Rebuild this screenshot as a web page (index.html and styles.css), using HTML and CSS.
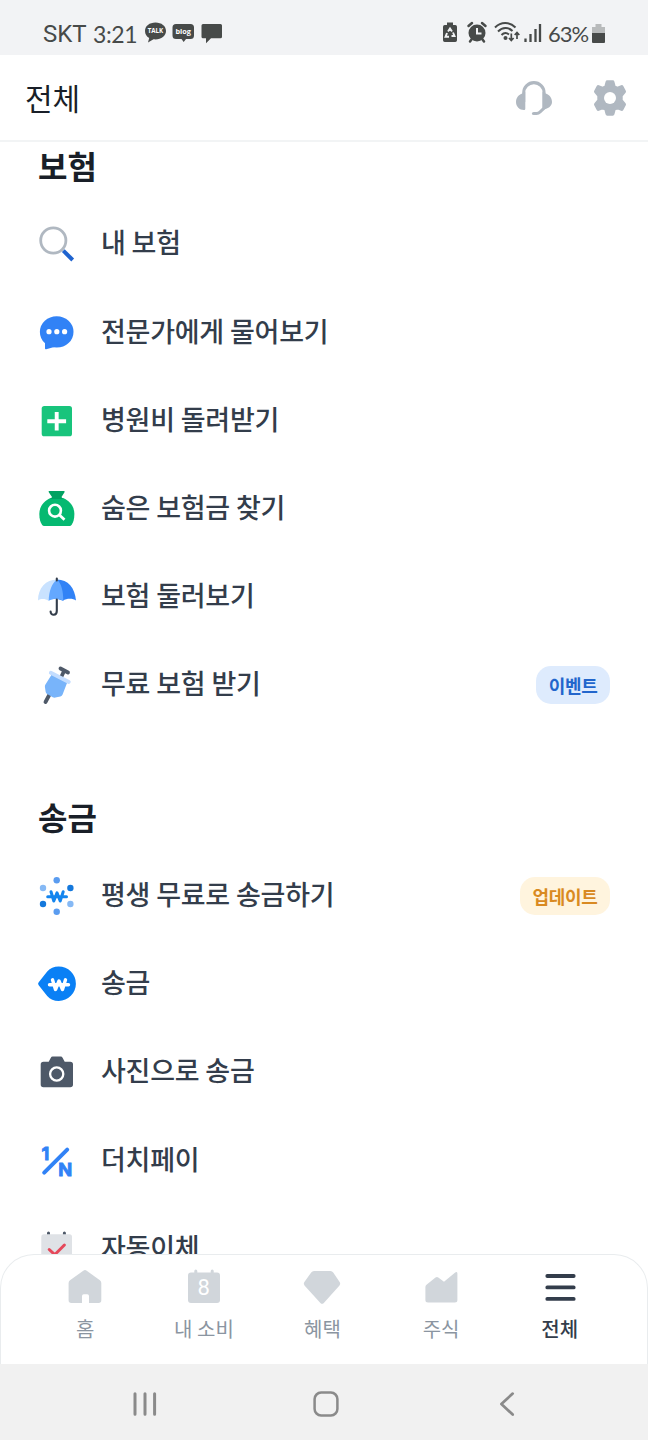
FILE: index.html
```html
<!DOCTYPE html>
<html lang="ko">
<head>
<meta charset="utf-8">
<meta name="viewport" content="width=device-width">
<title>전체</title>
<link rel="stylesheet" href="styles.css">
</head>
<body>
<div class="phone">
  <div class="status">
    <span class="carrier">SKT</span>
    <span class="clock">3:21</span>
    <svg class="notices" width="80" height="24" viewBox="0 0 80 24">
      <path fill="#474a49" d="M11.500 1.500C5.500 1.500 1 5 1 10c0 3 1.500 5.500 4.200 7L4 21.500l5.500-3.200c7 .8 12.500-3 12.500-8.300 0-5-4.500-8.500-10.500-8.500z"/>
      <text class="tiny" x="3.700" y="12" textLength="15.500" lengthAdjust="spacingAndGlyphs">TALK</text>
      <path fill="#474a49" d="M32 3h14.500a3.500 3.500 0 0 1 3.500 3.500v8a3.500 3.500 0 0 1-3.500 3.500H42l-2.300 3L37.500 18H32a3.500 3.500 0 0 1-3.500-3.500v-8A3.500 3.500 0 0 1 32 3z"/>
      <text class="tiny" x="31.500" y="12.500" textLength="15.500" lengthAdjust="spacingAndGlyphs">blog</text>
      <path fill="#474a49" d="M59 3h17.500a1.500 1.500 0 0 1 1.500 1.500v11.200a1.500 1.500 0 0 1-1.500 1.500H67l-5 5V17.200H59a1.500 1.500 0 0 1-1.500-1.500V4.500A1.500 1.500 0 0 1 59 3z"/>
    </svg>
    <svg class="signals" width="104" height="24" viewBox="0 0 104 24">
      <path fill="#474a49" d="M5 1.500h6V4h2.300A1.700 1.700 0 0 1 15 5.700v13.600a1.700 1.700 0 0 1-1.700 1.700H2.700A1.700 1.700 0 0 1 1 19.300V5.700A1.700 1.700 0 0 1 2.700 4H5z"/>
      <path fill="none" stroke="#f2f3f5" stroke-width="1.900" d="M6 10.500l2-3 2 3M11 11.500l1.500 3.500H9.500M7 15.800H3.500L5 12"/>
      <circle cx="35" cy="12" r="8.500" fill="#474a49"/>
      <path fill="none" stroke="#474a49" stroke-width="2.500" stroke-linecap="round" d="M26.500 5l3.500-3M43.500 5L40 2M29.500 18.500L28 20.500M40.500 18.500L42 20.500"/>
      <path fill="none" stroke="#f2f3f5" stroke-width="2" d="M35 7v5.500h4.500"/>
      <g fill="none" stroke="#474a49" stroke-width="2">
        <path d="M53 6.500c6-6 14.500-6 20.500 0M56 10.500c4.500-4.500 10.500-4.500 14.500-.5M59.500 14c2-2 5-2.500 7.500-.5"/>
        <path stroke-width="1.700" d="M69.300 12.500v7M67 17l2.300 2.500 2.300-2.500M75 18v-6.500M72.700 14l2.300-2.500 2.300 2.500"/>
        <path stroke-width="2.300" d="M83.500 17.500V21M88.500 13v8M93.500 8v13M98 3v18"/>
      </g>
      <circle cx="63.500" cy="17" r="2" fill="#474a49"/>
    </svg>
    <span class="percent">63%</span>
    <svg width="13" height="20" viewBox="0 0 13 20">
      <path fill="#b8babb" d="M3.500 0h6v3H13v7H0V3h3.500z"/>
      <path fill="#474a49" d="M0 9h13v9a1 1 0 0 1-1 1H1a1 1 0 0 1-1-1z"/>
    </svg>
  </div>

  <header class="header">
    <h1 class="page-title">전체</h1>
    <svg width="40" height="40" viewBox="0 0 40 40">
      <g fill="#b0b8c1">
        <path d="M11.300 14v16.700c0 .8-.6 1.300-1.400 1.300C5.500 32 2 28.500 2 24c0-4.200 2.800-7.300 6.300-8.500z"/>
        <path d="M28.500 14v17.500c5.500-.5 9.500-3.300 9.500-7.500 0-4.200-2.800-7.300-6.300-8.500z"/>
      </g>
      <path fill="none" stroke="#b0b8c1" stroke-width="3.100" d="M9.700 24V14.800a10.200 10.200 0 0 1 20.400 0V30L26 34q-1.500 1.500-3.500 1.500h-2.700"/>
      <circle cx="19.500" cy="35.500" r="1.550" fill="#b0b8c1"/>
    </svg>
    <svg class="gear" width="40" height="40" viewBox="0 0 40 40">
      <path fill="#b0b8c1" stroke="#b0b8c1" stroke-width="3.600" stroke-linejoin="round" d="M17.300 4.100h5.400l1.200 4.700 3.200 1.800 4.600-1.700 2.500 4.700-3.300 3.900v5l3.300 3.900-2.500 4.700-4.600-1.700-3.200 1.800-1.200 4.700h-5.400l-1.200-4.700-3.200-1.800-4.600 1.700-2.500-4.700 3.300-3.900v-5l-3.300-3.900 2.500-4.700 4.600 1.700 3.200-1.800z"/>
      <circle cx="20" cy="20" r="6" fill="#fff"/>
    </svg>
  </header>

  <main class="content">
    <section class="group">
      <h2 class="group-title">보험</h2>
      <ul class="list">
        <li class="row"><svg class="icon" viewBox="0 0 40 40"><circle cx="16.300" cy="16.500" r="12.600" fill="none" stroke="#b0b8c1" stroke-width="2.800"/><path d="M26.300 26.700l9.400 9.300" stroke="#1f63cf" stroke-width="4"/></svg><span class="label">내 보험</span></li>
        <li class="row"><svg class="icon" viewBox="0 0 40 40"><ellipse cx="19.700" cy="18.900" rx="16.800" ry="15.700" fill="#3182f6"/><path fill="#3182f6" d="M8 28v7.500q0 1 1.200.7l8-2.200z"/><g fill="#fff"><circle cx="12" cy="18.700" r="2.600"/><circle cx="19.800" cy="18.700" r="2.600"/><circle cx="27.600" cy="18.700" r="2.600"/></g></svg><span class="label">전문가에게 물어보기</span></li>
        <li class="row"><svg class="icon" viewBox="0 0 40 40"><rect x="4.700" y="5" width="30.300" height="30.300" rx="2.600" fill="#18c47c"/><path d="M10.300 20.200h18.800M19.700 10.900v18.600" stroke="#fff" stroke-width="3.900"/></svg><span class="label">병원비 돌려받기</span></li>
        <li class="row"><svg class="icon" viewBox="0 0 40 40"><path fill="#05b971" d="M13.500 9C6.500 12 2.300 18 2.300 25c0 5 1.200 8.500 2.700 10.800q.8 1.200 2.200 1.200h25.300q1.400 0 2.200-1.200c1.500-2.300 2.700-5.800 2.700-10.800 0-7-4.200-13-11.200-16z"/><path fill="#02a262" d="M12.300 2h14.600q1.200 0 .6 1.200L24.500 8l1.500 2H13.500L15 8l-3.200-4.800Q11.100 2 12.300 2z"/><circle cx="18" cy="21.700" r="5.900" fill="none" stroke="#fff" stroke-width="2.600"/><path d="M22.200 25.800l5.300 5" stroke="#fff" stroke-width="2.800"/></svg><span class="label">숨은 보험금 찾기</span></li>
        <li class="row"><svg class="icon" viewBox="0 0 40 40"><path fill="#c9e2ff" d="M20 2.500C9 2.500 1 11 1 23.500c2.500-2 7.500-2 10.500.2 2-1.800 4-2 8.500-2z"/><path fill="#3182f6" d="M20 2.500c11 0 18 8.500 19 21-3-2.200-9.500-2.200-13 .2l-6-2z"/><path fill="#64a8ff" d="M20 2.500c-5.500 4-8 12-8.300 21.200 4-2.200 10.500-2.200 14.600 0C26.300 14.500 24.500 6.500 20 2.500z"/><path d="M19.800 1.500v2M19.800 22.500V34c0 5-6.200 5-6.200.5" fill="none" stroke="#333d4b" stroke-width="2.100" stroke-linecap="round"/></svg><span class="label">보험 둘러보기</span></li>
        <li class="row"><svg class="icon" viewBox="0 0 40 40"><path d="M23.500 3.500l7.500 4M27.300 5.500L24 12.500M12.500 29.500l-4 7.500" stroke="#4e5968" stroke-width="3.800" stroke-linecap="round"/><path fill="#78b4fa" d="M14.700 9.500l15.500 8-4.600 12q-.6 1.600-2.200 2l-5 1.100q-1.500.3-2.700-.4l-5.500-3.200q-1.200-.7-1.500-2l-.8-5q-.1-1.200.4-2.200z"/><path d="M13.800 7.800l18 9.200" stroke="#c3ddff" stroke-width="3.800" stroke-linecap="round"/></svg><span class="label">무료 보험 받기</span><span class="badge badge-event">이벤트</span></li>
      </ul>
    </section>
    <section class="group group-send">
      <h2 class="group-title">송금</h2>
      <ul class="list">
        <li class="row"><svg class="icon" viewBox="0 0 40 40"><g fill="#5a9cf0"><circle cx="19.700" cy="4.300" r="3.200"/><circle cx="19.700" cy="35.700" r="3.200"/></g><g fill="#86b9f5"><circle cx="6" cy="12" r="3.200"/><circle cx="33.400" cy="28" r="3.200"/></g><g fill="#1478dc"><circle cx="33.400" cy="12" r="3.200"/><circle cx="6" cy="28" r="3.200"/></g><path d="M14 15.800l2.800 9.200 3.200-8.200 3.200 8.200 3-9.200M10.700 20.700h3.500M26 20.700h3.500M17 20.700h6" fill="none" stroke="#1485ee" stroke-width="3" stroke-linecap="round" stroke-linejoin="round"/></svg><span class="label">평생 무료로 송금하기</span><span class="badge badge-update">업데이트</span></li>
        <li class="row"><svg class="icon" viewBox="0 0 40 40"><path fill="#0a80f5" d="M1.700 18.200L10.200 7.500C13.200 4.300 17 2.500 21.700 2.500a17.200 17.200 0 0 1 0 34.400c-4.700 0-8.500-1.800-11.500-5L1.700 21.200q-1.300-1.500 0-3z"/><path d="M15.500 15.800l3 9.700 3.500-8.500 3.500 8.500 3-9.700M12.500 20.800h3.500M28 20.800h3.500M19 20.800h6" fill="none" stroke="#fff" stroke-width="3.400" stroke-linecap="round" stroke-linejoin="round"/></svg><span class="label">송금</span></li>
        <li class="row"><svg class="icon" viewBox="0 0 40 40"><path fill="#4e5968" d="M6.500 9.700h5.200l2-3.800q.7-1.300 2-1.300h8q1.300 0 2 1.300l2 3.800h5.600q2.700 0 2.700 2.700v20.200q0 2.700-2.700 2.700H6.400q-2.700 0-2.700-2.700V12.400q0-2.700 2.800-2.700z"/><circle cx="19.700" cy="22" r="6.600" fill="none" stroke="#fff" stroke-width="2.300"/></svg><span class="label">사진으로 송금</span></li>
        <li class="row"><svg class="icon" viewBox="0 0 40 40"><path d="M7.200 31.700L30.200 8.700" stroke="#3182f6" stroke-width="4" stroke-linecap="round"/><text class="ratio" x="4.500" y="18.700">1</text><text class="ratio" x="21.300" y="35" textLength="14" lengthAdjust="spacingAndGlyphs">N</text></svg><span class="label">더치페이</span></li>
        <li class="row"><svg class="icon" viewBox="0 0 40 40"><path d="M11.500 4v4M27.400 4v4" stroke="#4e5968" stroke-width="3" stroke-linecap="round"/><rect x="4.300" y="5.300" width="30.700" height="30.700" rx="2.600" fill="#dfe2e6"/><path d="M12.200 20.500l5.500 5.200 9.700-9.700" fill="none" stroke="#e5485a" stroke-width="3" stroke-linecap="round" stroke-linejoin="round"/></svg><span class="label">자동이체</span></li>
      </ul>
    </section>
  </main>

  <nav class="tabs">
    <a class="tab"><svg class="icon" viewBox="0 0 40 40"><path fill="#d1d6db" d="M18.300 3.700L5 13.300q-1.400 1-1.400 2.700v17.300Q3.600 36 6.300 36H17v-7q0-1.800 1.800-1.800h3.400Q24 27.200 24 29v7h9.600q2.700 0 2.700-2.700V16q0-1.700-1.400-2.700L21.700 3.700q-1.700-1.200-3.400 0z"/></svg><span>홈</span></a>
    <a class="tab"><svg class="icon" viewBox="0 0 40 40"><path d="M11.800 4v4M28.200 4v4" stroke="#d1d6db" stroke-width="3" stroke-linecap="round"/><rect x="4" y="5.500" width="32" height="30.500" rx="3" fill="#d1d6db"/><text class="day" x="19.700" y="28.300">8</text></svg><span>내 소비</span></a>
    <a class="tab"><svg class="icon" viewBox="0 0 40 40"><path fill="#d1d6db" d="M12 4h16.500q1.700 0 2.700 1.500l6.600 9.800q1 1.600-.3 3.200L21.800 36q-1.700 1.700-3.400 0L2.500 18.500q-1.300-1.600-.3-3.200l7-9.800Q10.300 4 12 4z"/></svg><span>혜택</span></a>
    <a class="tab"><svg class="icon" viewBox="0 0 40 40"><path fill="#d1d6db" d="M5.500 17.800l9-7.300q1.500-1 2.800 0l5.700 4.300 11.200-9.300q2-1.300 2.200 1V33q0 2.500-2.500 2.500H7q-2.600 0-2.600-2.500V20q0-1.300 1.100-2.200z"/></svg><span>주식</span></a>
    <a class="tab tab-active"><svg class="icon" viewBox="0 0 40 40"><path d="M7.300 9h26.400M7.300 20.400h26.400M7.300 31.900h26.400" stroke="#333d4b" stroke-width="3.800" stroke-linecap="round"/></svg><span>전체</span></a>
  </nav>

  <div class="system">
    <svg width="30" height="30" viewBox="0 0 30 30"><path d="M5 4.800v20.400M15 4.800v20.400M24.600 4.800v20.400" stroke="#8a8a8a" stroke-width="3" stroke-linecap="round"/></svg>
    <svg width="30" height="30" viewBox="0 0 30 30"><rect x="3.600" y="3.600" width="22.800" height="22.800" rx="6.500" fill="none" stroke="#8a8a8a" stroke-width="2.500"/></svg>
    <svg width="30" height="30" viewBox="0 0 30 30"><path d="M20.700 4.600L9.400 15l11.300 10.600" fill="none" stroke="#8a8a8a" stroke-width="2.700" stroke-linecap="round" stroke-linejoin="round"/></svg>
  </div>
</div>
</body>
</html>
```
FILE: styles.css
```css
* { box-sizing: border-box; }
body { margin: 0; background: #fff; font-family: "Noto Sans CJK KR", sans-serif; }
h1, h2, ul { margin: 0; padding: 0; font-weight: 400; }
ul { list-style: none; }
svg { display: block; flex: none; }

.phone {
  position: relative;
  display: flex;
  flex-direction: column;
  width: 648px;
  height: 1440px;
  overflow: hidden;
  background: #fff;
}

.status {
  flex: none;
  display: flex;
  align-items: center;
  height: 55px;
  padding: 12px 43px 0;
  background: #f2f3f5;
  color: #474a49;
  font: 24px/30px Roboto, sans-serif;
}
.carrier { width: 50px; }
.clock { width: 51px; font-family: Lato, sans-serif; font-size: 23px; letter-spacing: -0.4px; }
.notices { margin-top: -2px; }
.signals { margin: -2px 2px 0 auto; }
.percent { width: 44px; font-family: Lato, sans-serif; font-size: 22px; letter-spacing: -1px; }
.tiny { fill: #fff; font: 700 7.5px "Open Sans", sans-serif; }

.header {
  flex: none;
  display: flex;
  align-items: center;
  height: 87px;
  padding: 0 18px 0 25px;
  border-bottom: 2px solid #f2f4f5;
}
.page-title {
  margin: -1px auto 0 0;
  color: #191f28;
  font-size: 30px;
  line-height: 44px;
}
.gear { margin-left: 36px; }

.content { flex: 1; min-height: 0; overflow: hidden; padding: 0 38px; }
.group-title {
  height: 58.400px;
  color: #191f28;
  font-size: 32px;
  font-weight: 700;
  line-height: 46px;
}
.group-send { padding-top: 64px; }
.group-send .group-title { line-height: 44px; }
.row { display: flex; align-items: center; height: 88.200px; margin-left: -1px; }
.icon { width: 40px; height: 40px; }
.label {
  margin: -4px auto 0 24px;
  color: #333d4b;
  font-size: 27px;
  font-weight: 500;
  line-height: 40px;
  letter-spacing: -0.250px;
  word-spacing: -1.300px;
  white-space: pre;
}
.badge {
  height: 38px;
  padding: 0 12.500px;
  border-radius: 15px;
  font-size: 18px;
  font-weight: 700;
  line-height: 39px;
  letter-spacing: -0.300px;
}
.badge-event { background: #deebfd; color: #2266cc; }
.badge-update { background: #fff4de; color: #d98a22; }
.ratio { fill: #3182f6; stroke: #3182f6; stroke-width: 0.800px; font: 700 18px Inter, sans-serif; }

.tabs {
  position: absolute;
  left: 0;
  right: 0;
  bottom: 76px;
  display: flex;
  height: 110px;
  padding: 12px 28px 0 25px;
  border: 1px solid #e9ecee;
  border-bottom: 0;
  border-radius: 34px 34px 0 0;
  background: #fff;
}
.tab {
  flex: 1;
  display: flex;
  flex-direction: column;
  align-items: center;
  color: #8b95a1;
  font-size: 20px;
  line-height: 30px;
  word-spacing: -1px;
}
.tab span { margin-top: 7px; }
.tab-active { color: #333d4b; font-weight: 500; }
.day { fill: #fff; font: 400 22px Roboto, sans-serif; text-anchor: middle; }

.system {
  flex: none;
  display: flex;
  align-items: center;
  justify-content: space-between;
  height: 76px;
  padding: 4px 126px 0 129.500px;
  background: #f1f1f1;
}
```
